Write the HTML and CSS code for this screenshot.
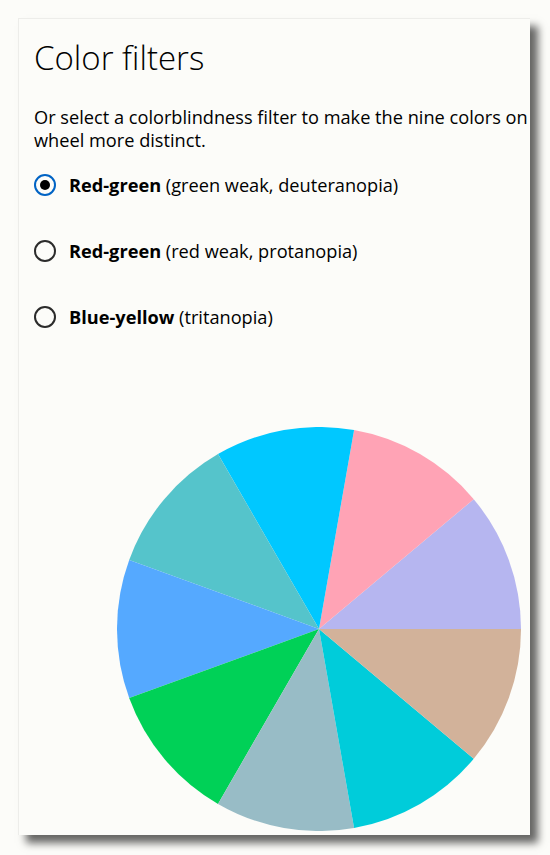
FILE: index.html
```html
<!DOCTYPE html>
<html lang="en">
<head>
<meta charset="utf-8">
<title>Color filters</title>
<link rel="stylesheet" href="styles.css">
</head>
<body>
<div class="panel">
  <h1 class="title">Color filters</h1>
  <p class="desc">Or select a colorblindness filter to make the nine colors on wheel more distinct.</p>
  <div class="options">
    <div class="option">
      <span class="radio radio-on"><span class="dot"></span></span>
      <span class="label"><b>Red-green</b> (green weak, deuteranopia)</span>
    </div>
    <div class="option">
      <span class="radio"></span>
      <span class="label"><b>Red-green</b> (red weak, protanopia)</span>
    </div>
    <div class="option">
      <span class="radio"></span>
      <span class="label"><b>Blue-yellow</b> (tritanopia)</span>
    </div>
  </div>
  <svg class="wheel" width="404" height="404" viewBox="0 0 404 404">
    <path d="M202 202 L404 202 A202 202 0 0 0 356.74 72.16 Z" fill="#b6b6f0"/>
    <path d="M202 202 L356.74 72.16 A202 202 0 0 0 237.08 3.07 Z" fill="#ffa3b5"/>
    <path d="M202 202 L237.08 3.07 A202 202 0 0 0 101 27.06 Z" fill="#00c8ff"/>
    <path d="M202 202 L101 27.06 A202 202 0 0 0 12.18 132.91 Z" fill="#55c4cb"/>
    <path d="M202 202 L12.18 132.91 A202 202 0 0 0 12.18 271.09 Z" fill="#55a9ff"/>
    <path d="M202 202 L12.18 271.09 A202 202 0 0 0 101 376.94 Z" fill="#00d157"/>
    <path d="M202 202 L101 376.94 A202 202 0 0 0 237.08 400.93 Z" fill="#98bcc6"/>
    <path d="M202 202 L237.08 400.93 A202 202 0 0 0 356.74 331.84 Z" fill="#00ccda"/>
    <path d="M202 202 L356.74 331.84 A202 202 0 0 0 404 202 Z" fill="#d2b29a"/>
  </svg>
</div>
</body>
</html>
```
FILE: styles.css
```css
html, body {
  margin: 0;
  padding: 0;
  background: #fcfcf9;
}

body {
  width: 550px;
  height: 855px;
  overflow: hidden;
  font-family: "Open Sans", "Noto Sans", sans-serif;
  color: #000;
}

.panel {
  margin: 18px 0 0 18px;
  width: 512px;
  height: 817px;
  box-sizing: border-box;
  padding: 19px 0 0 15px;
  background: #fcfcf9;
  border-top: 1px solid #ededea;
  border-left: 1px solid #ededea;
  box-shadow: 8px 8px 8px rgba(0, 0, 0, 0.6);
  display: flex;
  flex-direction: column;
}

.title {
  margin: 0;
  font-size: 33px;
  font-weight: 300;
  line-height: 40px;
}

.desc {
  margin: 28px 0 0 0;
  width: 510px;
  font-size: 18.2px;
  line-height: 23px;
}

.options {
  display: flex;
  flex-direction: column;
}

.option {
  height: 66px;
  display: flex;
  align-items: center;
  gap: 13px;
}

.radio {
  width: 22px;
  height: 22px;
  box-sizing: border-box;
  border: 2px solid #2b2b2b;
  border-radius: 50%;
  display: flex;
  align-items: center;
  justify-content: center;
  flex: none;
}

.radio-on {
  border-color: #0063c4;
}

.dot {
  width: 10px;
  height: 10px;
  border-radius: 50%;
  background: #000;
}

.label {
  font-size: 18.2px;
  line-height: 23px;
}

.label b {
  font-weight: 700;
}

.wheel {
  display: block;
  margin: 77px 0 0 83px;
}
```
